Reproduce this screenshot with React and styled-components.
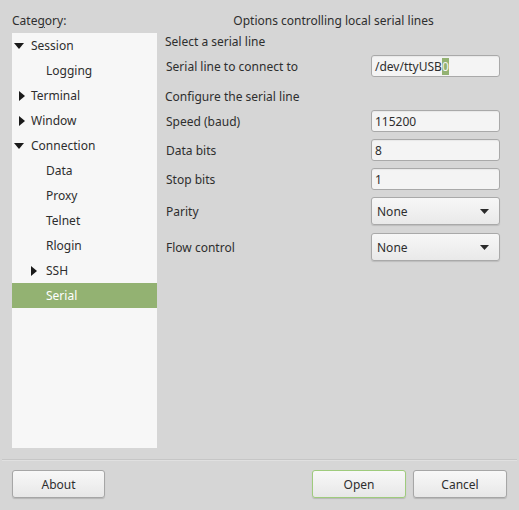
import styled, { createGlobalStyle } from "styled-components";

const Global = createGlobalStyle`
  html, body {
    margin: 0;
    padding: 0;
    background: #d6d6d6;
  }
  body {
    font-family: "Noto Sans", "DejaVu Sans", sans-serif;
    font-size: 12px;
    color: #2e2e2e;
  }
`;

const Window = styled.div`
  width: 519px;
  height: 510px;
  display: flex;
  flex-direction: column;
  background: #d6d6d6;
  overflow: hidden;
`;

const Main = styled.div`
  display: flex;
  padding: 0 12px 0 12px;
  height: 448px;
`;

const LeftCol = styled.div`
  width: 145px;
  display: flex;
  flex-direction: column;
`;

const Caption = styled.div`
  height: 33px;
  line-height: 41px;
  white-space: nowrap;
`;

const Mnemonic = styled.span`
  text-decoration: underline;
  text-underline-offset: 2px;
`;

const Tree = styled.div`
  flex: 1;
  background: #f7f7f7;
`;

const TreeRow = styled.div`
  height: 25px;
  display: flex;
  align-items: center;
  padding-left: ${(p) => p.$indent}px;
  background: ${(p) => (p.$selected ? "#93b272" : "transparent")};
  color: ${(p) => (p.$selected ? "#ffffff" : "#2e2e2e")};
  white-space: nowrap;
`;

const Arrow = styled.span`
  width: ${(p) => (p.$inner ? 18 : 19)}px;
  display: inline-flex;
  align-items: center;
  justify-content: ${(p) => (p.$down ? "flex-start" : "center")};
  padding-left: ${(p) => (p.$down ? 2 : 0)}px;
  padding-right: ${(p) => (p.$inner ? 6 : 0)}px;
  box-sizing: border-box;
`;

const RightCol = styled.div`
  flex: 1;
  margin-left: 4px;
  display: flex;
  flex-direction: column;
  padding-right: 7px;
`;

const Title = styled.div`
  height: 33px;
  line-height: 41px;
  text-align: center;
  margin-left: 6px;
`;

const SectionLabel = styled.div`
  height: 18px;
  line-height: 18px;
  margin-top: ${(p) => p.$top}px;
  padding-left: 4px;
`;

const Row = styled.div`
  display: flex;
  align-items: center;
  justify-content: space-between;
  height: ${(p) => p.$h}px;
  margin-top: ${(p) => p.$top}px;
  padding-left: 5px;
`;

const Field = styled.div`
  width: 129px;
  height: 22px;
  box-sizing: border-box;
  border: 1px solid #a9a9a9;
  border-radius: 3px;
  background: #f4f4f4;
  display: flex;
  align-items: center;
  padding-left: 3px;
  box-shadow: inset 0 1px 1px rgba(0, 0, 0, 0.05);
`;

const Selected = styled.span`
  background: #93b272;
  color: #f4f4f4;
  line-height: 17px;
`;

const Combo = styled.div`
  width: 129px;
  height: 28px;
  box-sizing: border-box;
  border: 1px solid #a9a9a9;
  border-radius: 3px;
  background: linear-gradient(#f7f7f7, #e9e9e9);
  display: flex;
  align-items: center;
  justify-content: space-between;
  padding: 0 10px 0 5px;
  box-shadow: 0 1px 1px rgba(0, 0, 0, 0.12);
`;

const Separator = styled.div`
  height: 1px;
  background: #c6c6c6;
  margin: 11px 2px 0 2px;
  border-bottom: 1px solid #e0e0e0;
`;

const Footer = styled.div`
  display: flex;
  align-items: center;
  padding: 9px 12px 0 12px;
  gap: 7px;
`;

const Spacer = styled.div`
  flex: 1;
`;

const Button = styled.div`
  width: ${(p) => p.$w}px;
  height: 28px;
  box-sizing: border-box;
  border: 1px solid ${(p) => (p.$default ? "#9fcb7d" : "#a6a6a6")};
  border-radius: 3px;
  background: linear-gradient(#f8f8f8, #e7e7e7);
  display: flex;
  align-items: center;
  justify-content: center;
  box-shadow: 0 1px 1px rgba(0, 0, 0, 0.15);
`;

const DownTri = () => (
  <svg width="10" height="6" viewBox="0 0 10 6">
    <polygon points="0,0 10,0 5,6" fill="#1a1a1a" />
  </svg>
);

const RightTri = () => (
  <svg width="6" height="10" viewBox="0 0 6 10">
    <polygon points="0,0 6,5 0,10" fill="#1a1a1a" />
  </svg>
);

const ComboTri = () => (
  <svg width="9" height="5" viewBox="0 0 9 5">
    <polygon points="0,0 9,0 4.5,5" fill="#2a2a2a" />
  </svg>
);

const tree = [
  { label: "Session", indent: 0, arrow: "down" },
  { label: "Logging", indent: 34 },
  { label: "Terminal", indent: 0, arrow: "right" },
  { label: "Window", indent: 0, arrow: "right" },
  { label: "Connection", indent: 0, arrow: "down" },
  { label: "Data", indent: 34 },
  { label: "Proxy", indent: 34 },
  { label: "Telnet", indent: 34 },
  { label: "Rlogin", indent: 34 },
  { label: "SSH", indent: 16, arrow: "right", inner: true },
  { label: "Serial", indent: 34, selected: true },
];

const App = () => {
  return (
    <Window>
      <Global />
      <Main>
        <LeftCol>
          <Caption>
            Cate<Mnemonic>g</Mnemonic>ory:
          </Caption>
          <Tree>
            {tree.map((item) => (
              <TreeRow key={item.label} $indent={item.indent} $selected={item.selected}>
                {item.arrow && (
                  <Arrow $down={item.arrow === "down"} $inner={item.inner}>
                    {item.arrow === "down" ? <DownTri /> : <RightTri />}
                  </Arrow>
                )}
                {item.label}
              </TreeRow>
            ))}
          </Tree>
        </LeftCol>
        <RightCol>
          <Title>Options controlling local serial lines</Title>
          <SectionLabel $top={0}>Select a serial line</SectionLabel>
          <Row $h={22} $top={4}>
            <span>Serial line to connect to</span>
            <Field>
              /dev/ttyUSB<Selected>0</Selected>
            </Field>
          </Row>
          <SectionLabel $top={11}>Configure the serial line</SectionLabel>
          <Row $h={22} $top={4}>
            <span>Speed (baud)</span>
            <Field>115200</Field>
          </Row>
          <Row $h={22} $top={7}>
            <span>Data bits</span>
            <Field>8</Field>
          </Row>
          <Row $h={22} $top={7}>
            <span>Stop bits</span>
            <Field>1</Field>
          </Row>
          <Row $h={28} $top={7}>
            <span>Parity</span>
            <Combo>
              None
              <ComboTri />
            </Combo>
          </Row>
          <Row $h={28} $top={8}>
            <span>Flow control</span>
            <Combo>
              None
              <ComboTri />
            </Combo>
          </Row>
        </RightCol>
      </Main>
      <Separator />
      <Footer>
        <Button $w={93}>About</Button>
        <Spacer />
        <Button $w={94} $default>
          Open
        </Button>
        <Button $w={94}>Cancel</Button>
      </Footer>
    </Window>
  );
};

export default App;
